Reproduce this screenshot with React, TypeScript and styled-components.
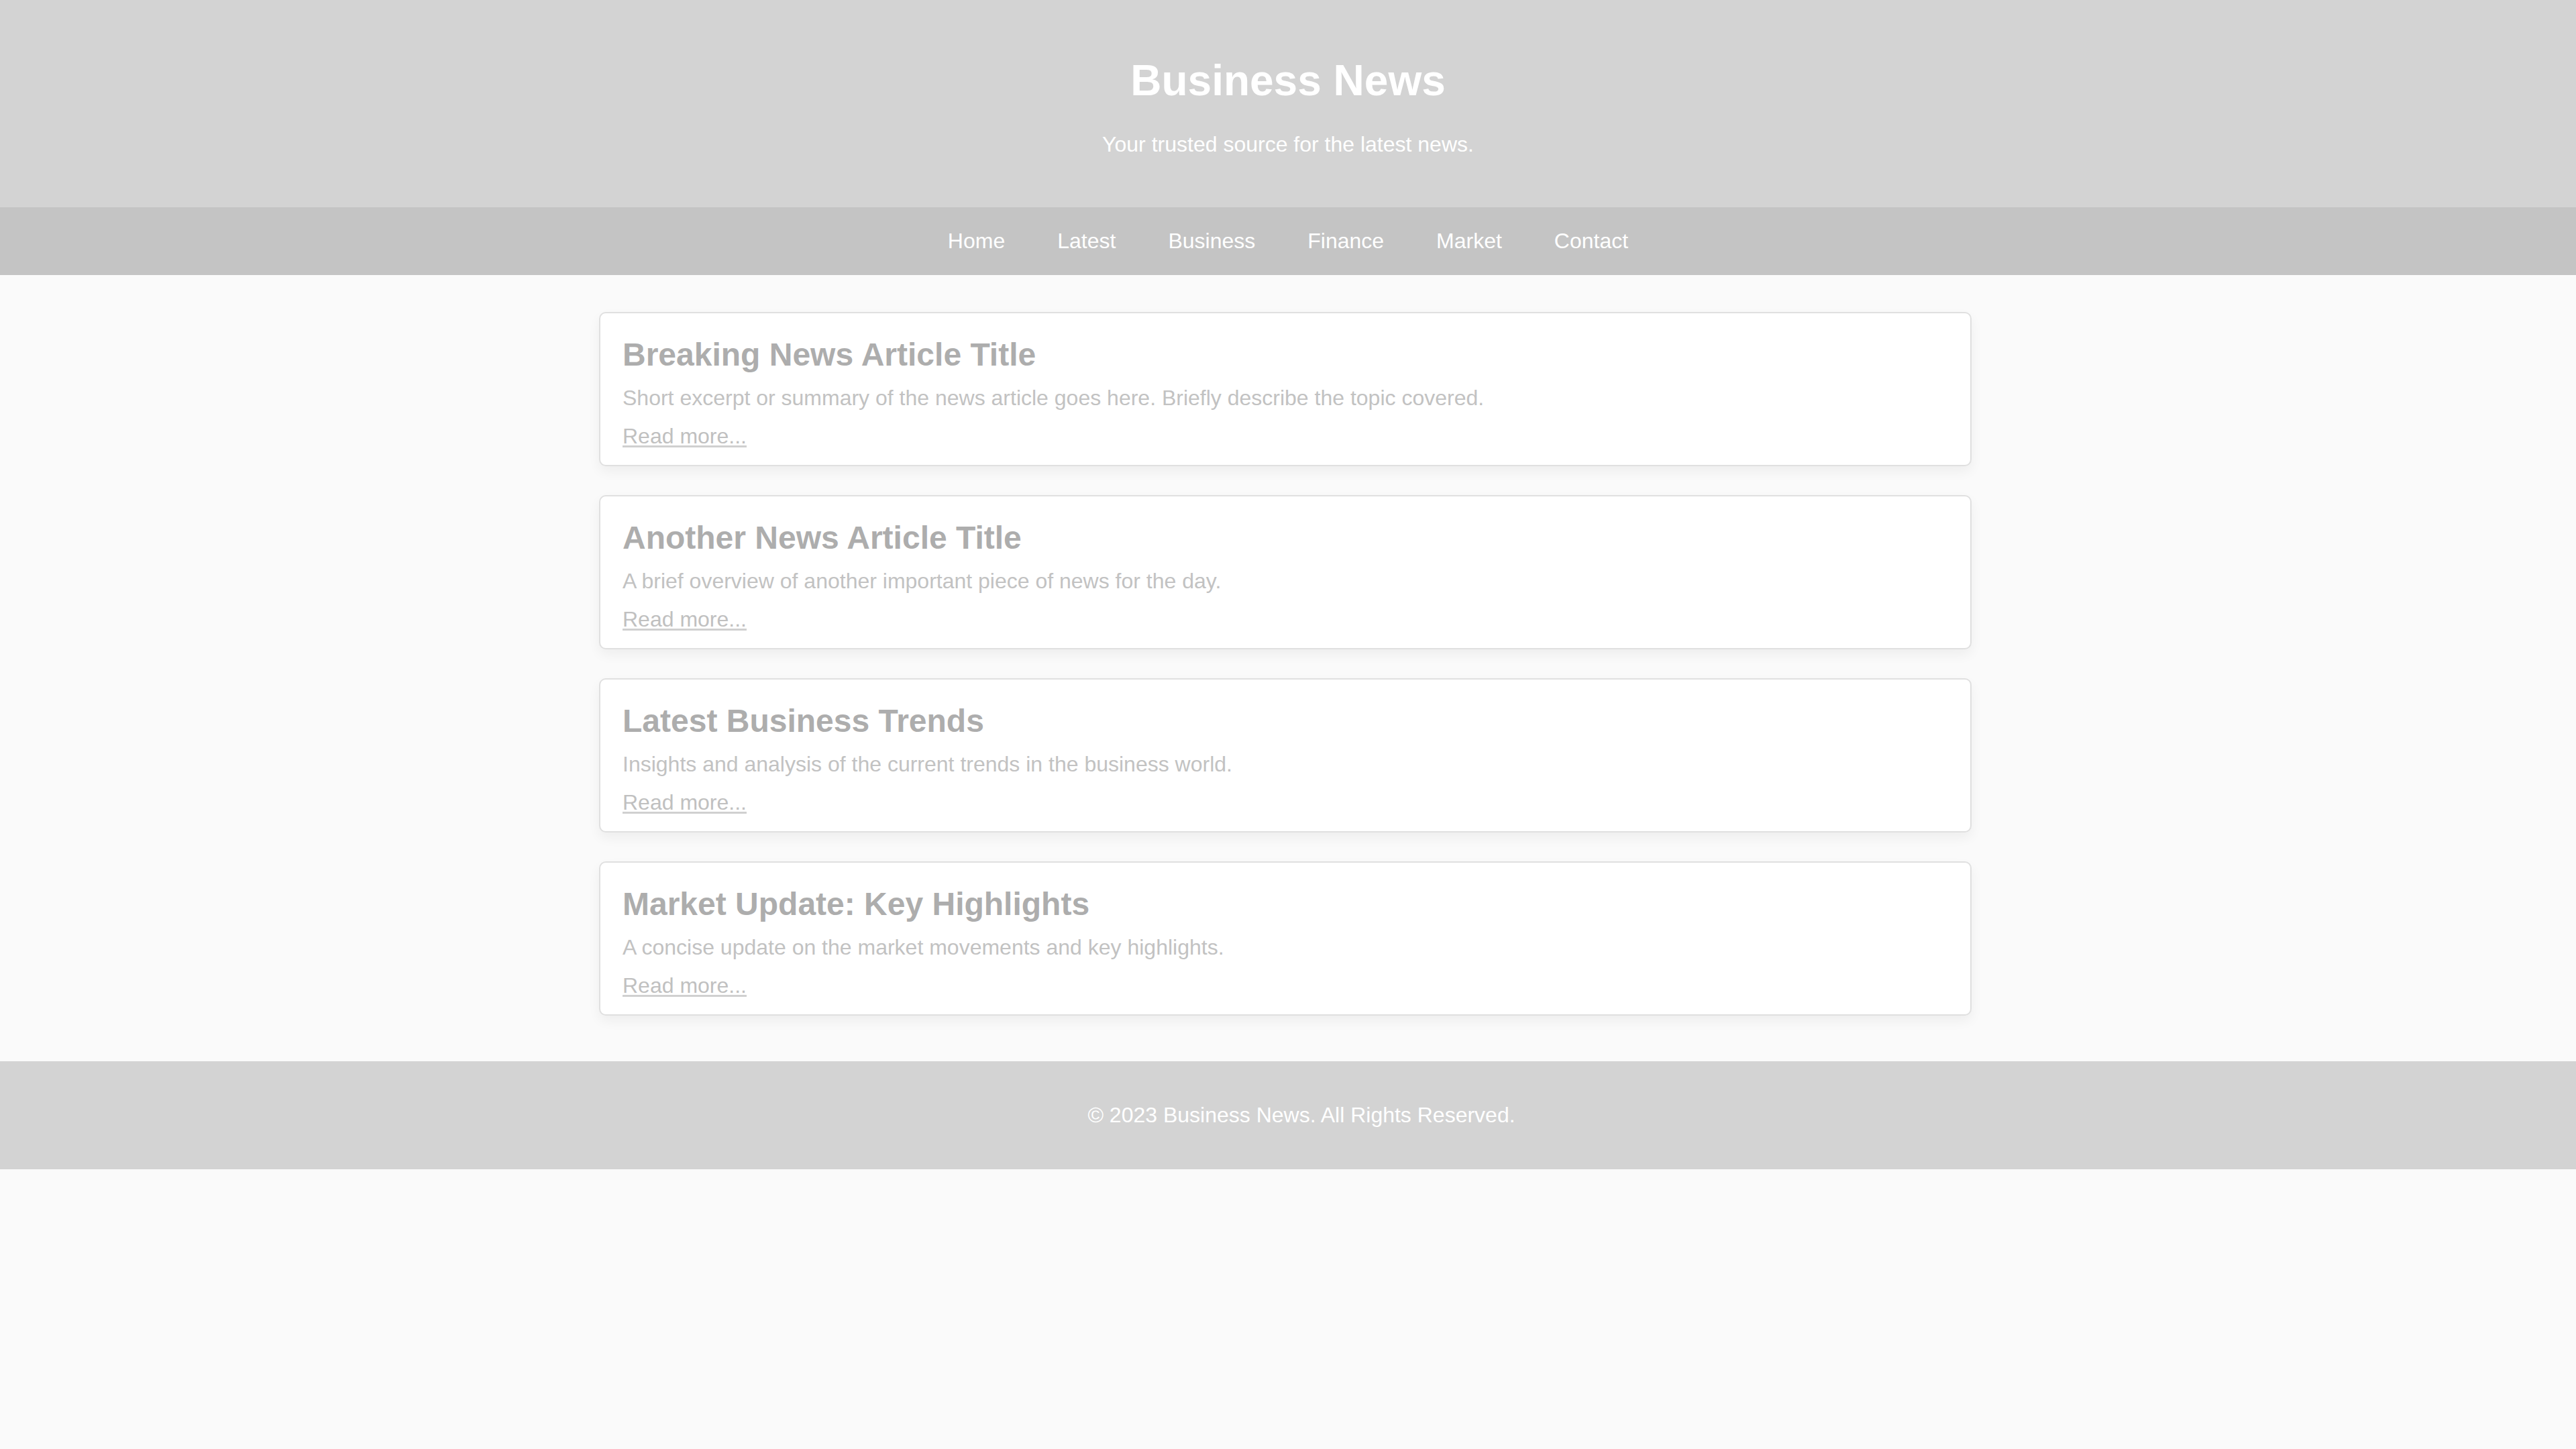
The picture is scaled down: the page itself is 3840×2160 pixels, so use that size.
import React from "react";
import styled, { createGlobalStyle } from "styled-components";

const GlobalStyle = createGlobalStyle`
  html, body {
    margin: 0;
    padding: 0;
    background: #fafafa;
    font-family: "Liberation Sans", Arial, Helvetica, sans-serif;
  }
  * { box-sizing: border-box; }
`;

const Page = styled.div`
  min-height: 2160px;
  background: #fafafa;
  display: flex;
  flex-direction: column;
`;

const Header = styled.header`
  background: #d3d3d3;
  color: #ffffff;
  text-align: center;
  padding: 83px 0 75px;
`;

const SiteTitle = styled.h1`
  margin: 0 0 40px;
  font-size: 64px;
  line-height: 74px;
  font-weight: 700;
`;

const Tagline = styled.p`
  margin: 0;
  font-size: 32px;
  line-height: 37px;
`;

const Nav = styled.nav`
  background: #c4c4c4;
  display: flex;
  justify-content: center;
  gap: 78px;
  padding: 32px 0;
`;

const NavLink = styled.a`
  color: #ffffff;
  text-decoration: none;
  font-size: 32px;
  line-height: 37px;
`;

const Main = styled.main`
  padding: 55px 8px 68px 0;
  display: flex;
  flex-direction: column;
  align-items: center;
  gap: 43px;
`;

const Card = styled.article`
  width: 2046px;
  background: #ffffff;
  border: 2px solid #e0e0e0;
  border-radius: 10px;
  box-shadow: 0 8px 18px rgba(0, 0, 0, 0.05);
  padding: 34px 33px 24px;
`;

const CardTitle = styled.h2`
  margin: 0 0 18px;
  font-size: 48px;
  line-height: 56px;
  font-weight: 700;
  color: #adadad;
`;

const Excerpt = styled.p`
  margin: 0 0 20px;
  font-size: 32px;
  line-height: 37px;
  color: #c2c2c2;
`;

const ReadMore = styled.a`
  display: inline-block;
  font-size: 32px;
  line-height: 37px;
  color: #c0c0c0;
  text-decoration: underline;
  text-decoration-color: #d0d0d0;
  text-decoration-thickness: 3px;
  text-underline-offset: 3px;
`;

const Footer = styled.footer`
  background: #d3d3d3;
  color: #ffffff;
  text-align: center;
  padding: 62px 0 62px 40px;
  font-size: 32px;
  line-height: 37px;
`;

const navItems = ["Home", "Latest", "Business", "Finance", "Market", "Contact"];

const articles = [
  {
    title: "Breaking News Article Title",
    excerpt:
      "Short excerpt or summary of the news article goes here. Briefly describe the topic covered.",
  },
  {
    title: "Another News Article Title",
    excerpt: "A brief overview of another important piece of news for the day.",
  },
  {
    title: "Latest Business Trends",
    excerpt: "Insights and analysis of the current trends in the business world.",
  },
  {
    title: "Market Update: Key Highlights",
    excerpt: "A concise update on the market movements and key highlights.",
  },
];

export default function App() {
  return (
    <>
      <GlobalStyle />
      <Page>
        <Header>
          <SiteTitle>Business News</SiteTitle>
          <Tagline>Your trusted source for the latest news.</Tagline>
        </Header>
        <Nav>
          {navItems.map((item) => (
            <NavLink key={item} href="#">
              {item}
            </NavLink>
          ))}
        </Nav>
        <Main>
          {articles.map((a) => (
            <Card key={a.title}>
              <CardTitle>{a.title}</CardTitle>
              <Excerpt>{a.excerpt}</Excerpt>
              <ReadMore href="#">Read more...</ReadMore>
            </Card>
          ))}
        </Main>
        <Footer>© 2023 Business News. All Rights Reserved.</Footer>
      </Page>
    </>
  );
}
